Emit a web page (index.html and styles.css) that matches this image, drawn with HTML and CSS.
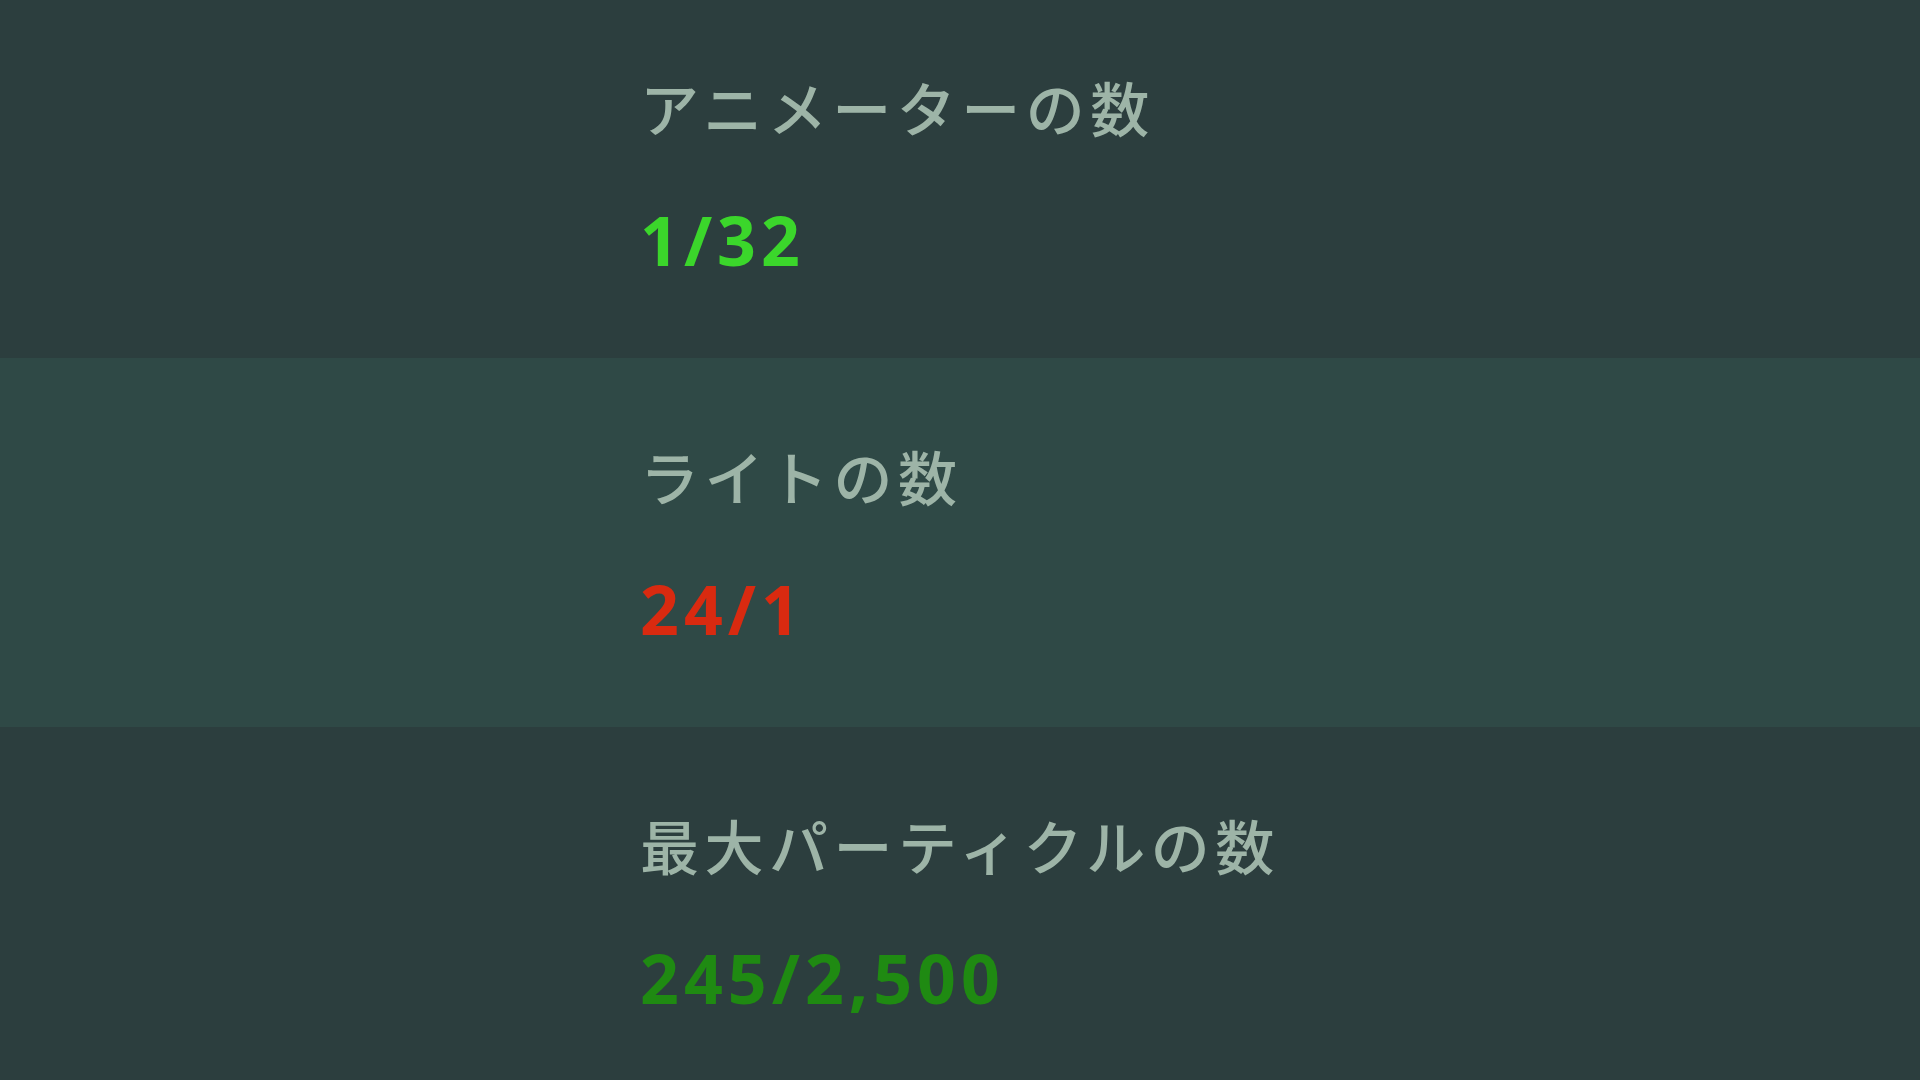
FILE: index.html
```html
<!DOCTYPE html>
<html lang="ja">
<head>
<meta charset="utf-8">
<link rel="stylesheet" href="styles.css">
</head>
<body>
<div class="list">
  <div class="row">
    <div class="label">アニメーターの数</div>
    <div class="value ok">1/32</div>
  </div>
  <div class="row alt">
    <div class="label">ライトの数</div>
    <div class="value bad">24/1</div>
  </div>
  <div class="row">
    <div class="label">最大パーティクルの数</div>
    <div class="value mid">245/2,500</div>
  </div>
</div>
</body>
</html>
```
FILE: styles.css
```css
html, body {
  margin: 0;
  padding: 0;
  width: 1920px;
  height: 1080px;
  overflow: hidden;
  background: #2c3e3e;
}
.list {
  margin-top: -11px;
  display: flex;
  flex-direction: column;
}
.row {
  height: 369px;
  box-sizing: border-box;
  padding: 78px 0 0 640px;
  background: #2c3e3e;
}
.row.alt {
  background: #2f4946;
}
.label {
  font-family: "Noto Sans CJK JP", "Noto Sans", sans-serif;
  font-size: 59px;
  font-weight: 500;
  line-height: 80px;
  letter-spacing: 5.5px;
  color: #9db4a7;
}
.value {
  margin-top: 53px;
  font-family: "Noto Sans", "Open Sans", sans-serif;
  font-size: 68px;
  font-weight: 700;
  line-height: 80px;
  letter-spacing: 5px;
}
.ok { color: #3bd62b; }
.bad { color: #d92a10; }
.mid { color: #1f8a12; }
```
